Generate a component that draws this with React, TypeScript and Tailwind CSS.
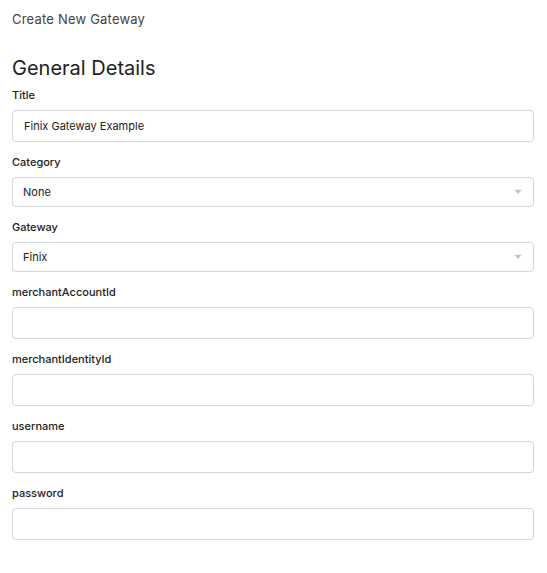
import React from "react";

const Caret = () => (
  <svg
    className="absolute right-[11px] top-1/2 -translate-y-1/2"
    width="8"
    height="5"
    viewBox="0 0 8 5"
  >
    <path d="M0 0 L8 0 L4 4.5 Z" fill="#c4c4c4" />
  </svg>
);

interface FieldProps {
  label: string;
  value?: string;
  select?: boolean;
}

const Field: React.FC<FieldProps> = ({ label, value = "", select }) => {
  return (
    <div className="flex flex-col">
      <label className="text-[11px] font-medium text-[#222] leading-[15px] mb-[7px]">
        {label}
      </label>
      {select ? (
        <div className="relative h-[30px] border border-[#d3d6dc] rounded-[4px] bg-white flex items-center px-[10px] text-[11px] text-[#222]">
          {value}
          <Caret />
        </div>
      ) : (
        <input
          defaultValue={value}
          className="h-[32px] border border-[#d3d6dc] rounded-[4px] bg-white px-[11px] text-[11px] text-[#222] outline-none"
        />
      )}
    </div>
  );
};

export default function App() {
  return (
    <div
      className="min-h-screen bg-white pl-[12px] pr-[13px] pt-[11px]"
      style={{ fontFamily: "Inter, 'Noto Sans', sans-serif" }}
    >
      <h1 className="text-[13px] text-[#444] leading-[16px] tracking-[0.2px]">
        Create New Gateway
      </h1>
      <h2 className="text-[20px] text-[#222] leading-[24px] mt-[29px] mb-[8px]">
        General Details
      </h2>
      <div className="flex flex-col gap-[13px]">
        <Field label="Title" value="Finix Gateway Example" />
        <Field label="Category" value="None" select />
        <Field label="Gateway" value="Finix" select />
        <Field label="merchantAccountId" />
        <Field label="merchantIdentityId" />
        <Field label="username" />
        <Field label="password" />
      </div>
    </div>
  );
}
